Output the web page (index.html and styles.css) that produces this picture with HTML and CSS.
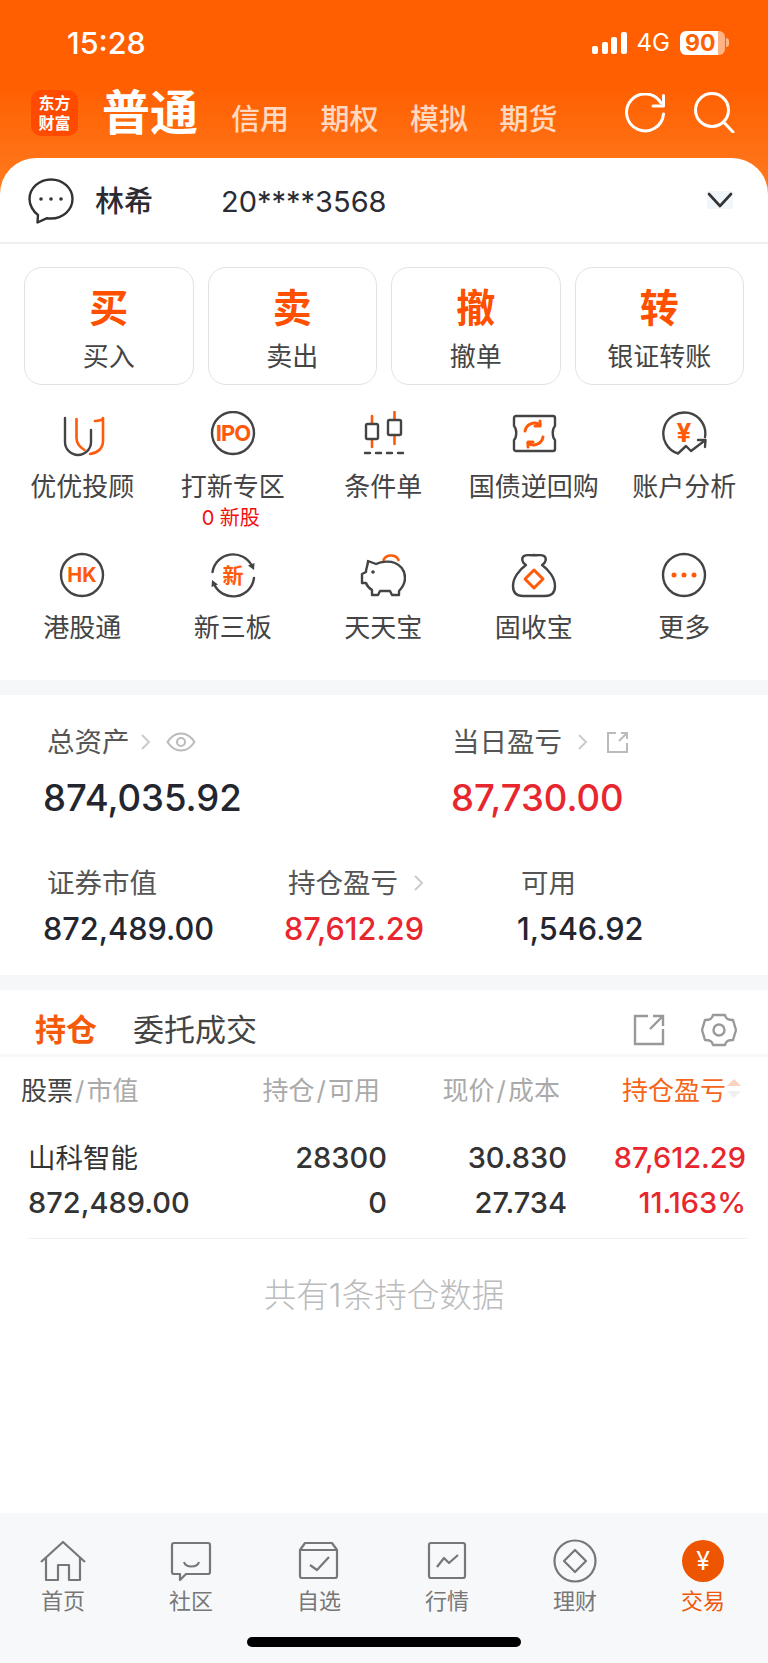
FILE: index.html
```html
<!DOCTYPE html>
<html lang="zh-CN">

<head>
    <meta charset="UTF-8">
    <meta name="viewport" content="width=device-width, initial-scale=1.0">
    <title>交易</title>
    <link rel="stylesheet" href="styles.css">
</head>

<body>
    <div class="app">
        <div class="top">
            <div class="status">
                <span class="time">15:28</span>
                <span class="bars"><i class="b1"></i><i class="b2"></i><i class="b3"></i><i class="b4"></i></span>
                <span class="net">4G</span>
                <span class="battery"><b>90</b></span>
                <span class="nub"></span>
            </div>
            <div class="nav">
                <div class="logo">东方<br>财富</div>
                <div class="nav-main">普通</div>
                <div class="nav-tabs">
                    <span>信用</span><span>期权</span><span>模拟</span><span>期货</span>
                </div>
                <svg class="refresh" width="40" height="40" viewBox="0 0 40 40" fill="none" stroke="#fff" stroke-width="3" stroke-linecap="round" stroke-linejoin="round">
                    <path d="M36 10A18.5 18.5 0 1 0 38.5 21" />
                    <path d="M28 13H38.5V2.500" />
                </svg>
                <svg class="search" width="42" height="42" viewBox="0 0 42 42" fill="none" stroke="#fff" stroke-width="3" stroke-linecap="round">
                    <circle cx="18" cy="19" r="16.500" />
                    <path d="M30 31.500L39 41" />
                </svg>
            </div>
            <div class="acct">
                <svg class="chat" width="46" height="46" viewBox="0 0 46 46" fill="none" stroke="#333" stroke-width="2.400" stroke-linejoin="round">
                    <path d="M23 1.500a21.500 19.500 0 0 1 0 39c-1.500 0-3-.1-4-.3L9.500 44.500l.5-7.500C5 33.500 1.500 27 1.500 21A21.500 19.500 0 0 1 23 1.500z" />
                    <circle cx="13" cy="21" r="1.800" fill="#333" stroke="none" />
                    <circle cx="23" cy="21" r="1.800" fill="#333" stroke="none" />
                    <circle cx="33" cy="21" r="1.800" fill="#333" stroke="none" />
                </svg>
                <span class="acct-name">林希</span>
                <span class="acct-no">20****3568</span>
                <span class="acct-more">
                    <svg width="26" height="18" viewBox="0 0 26 18" fill="none" stroke="#333" stroke-width="2.600" stroke-linecap="round" stroke-linejoin="round">
                        <path d="M2 3L13 15L24 3" />
                    </svg>
                </span>
            </div>
        </div>

        <div class="actions">
            <div class="act"><b>买</b><span>买入</span></div>
            <div class="act"><b>卖</b><span>卖出</span></div>
            <div class="act"><b>撤</b><span>撤单</span></div>
            <div class="act"><b>转</b><span>银证转账</span></div>
        </div>

        <div class="grid">
            <div class="cell">
                <svg class="ico" viewBox="0 0 46 46">
                    <path class="ln" d="M6 7V31a13 13 0 0 0 26 0V19" />
                    <path class="or" d="M17.500 8V27c0 5 3 9 8 12" />
                    <path class="or" d="M36 10c3 0 8-1 8-3V30c0 7-5 12-13 13" />
                </svg>
                <span class="lab">优优投顾</span>
            </div>
            <div class="cell">
                <svg class="ico" viewBox="0 0 46 46">
                    <circle class="ln" cx="23" cy="22" r="21" />
                    <text class="ico-t" x="23" y="30" font-size="22" letter-spacing="-1">IPO</text>
                </svg>
                <span class="lab">打新专区</span>
                <span class="sub">0 新股</span>
            </div>
            <div class="cell">
                <svg class="ico" viewBox="0 0 46 46">
                    <path class="or" d="M12 5V36M34.500 1V33" />
                    <rect class="ln fill" x="6" y="13" width="12" height="15" rx="1.500" />
                    <rect class="ln fill" x="28" y="9" width="13" height="15" rx="1.500" />
                    <path class="ln" d="M5 42H43" stroke-width="2.600" stroke-linecap="butt" stroke-dasharray="5 6" />
                </svg>
                <span class="lab">条件单</span>
            </div>
            <div class="cell">
                <svg class="ico" viewBox="0 0 46 46">
                    <path class="ln" d="M5 5H42a2 2 0 0 1 2 2V15c-3 3-3 11 0 14V38a2 2 0 0 1-2 2H5a2 2 0 0 1-2-2V29c3-3 3-11 0-14V7a2 2 0 0 1 2-2z" />
                    <path class="or th" d="M14 20a9.500 9.500 0 0 1 15-6M32 26a9.500 9.500 0 0 1-15 6" />
                    <path class="or th" d="M29 10v5h-5M17 36v-5h5" />
                </svg>
                <span class="lab">国债逆回购</span>
            </div>
            <div class="cell">
                <svg class="ico" viewBox="0 0 46 46">
                    <path class="ln" d="M44 26A21 21 0 1 0 17 42.500L25 35L30 40L44.500 29M37 29H44.500L44 36" />
                    <text class="ico-t" x="23" y="31" font-size="26">¥</text>
                </svg>
                <span class="lab">账户分析</span>
            </div>
            <div class="cell">
                <svg class="ico" viewBox="0 0 46 46">
                    <circle class="ln" cx="23" cy="23" r="21" />
                    <text class="ico-t" x="23" y="30" font-size="20">HK</text>
                </svg>
                <span class="lab">港股通</span>
            </div>
            <div class="cell">
                <svg class="ico" viewBox="0 0 46 46">
                    <path class="ln" d="M2.500 20A21 21 0 0 1 42 14M44 26A21 21 0 0 1 4 32" />
                    <path d="M38 13.500L44.500 11L44 18zM8 32.500L1.500 35L2 28z" fill="#444" />
                    <text class="ico-t cjk" x="23" y="31" font-size="21">新</text>
                </svg>
                <span class="lab">新三板</span>
            </div>
            <div class="cell">
                <svg class="ico" viewBox="0 0 46 46">
                    <path class="or" d="M23.500 8A8 7 0 0 1 38.500 8" />
                    <path class="ln fill" d="M8 9L16 12C22 9 30 9 35 11C42 14 45 20 45 26C45 32 42 36 39 39V43H32L30 39H20L18 43H12V38C9 36 7 34 6 31H2V22L6 20C6 16 8 13 8 9Z" />
                    <circle cx="13" cy="20" r="1.800" fill="#444" />
                </svg>
                <span class="lab">天天宝</span>
            </div>
            <div class="cell">
                <svg class="ico" viewBox="0 0 46 46">
                    <path class="ln" d="M15 13C11 11 10 6 13 4C16 2 19 4 23 3C27 4 30 2 33 4C36 6 35 11 31 13C38 18 44 26 44 34C44 41 40 44 34 44H12C6 44 2 41 2 34C2 26 8 18 15 13Z" />
                    <path class="or th" d="M23 18L32 27L23 36L14 27Z" />
                </svg>
                <span class="lab">固收宝</span>
            </div>
            <div class="cell">
                <svg class="ico" viewBox="0 0 46 46">
                    <circle class="ln" cx="23" cy="23" r="21" />
                    <circle cx="13" cy="23" r="2.500" fill="#ff5a0a" />
                    <circle cx="23" cy="23" r="2.500" fill="#ff5a0a" />
                    <circle cx="33" cy="23" r="2.500" fill="#ff5a0a" />
                </svg>
                <span class="lab">更多</span>
            </div>
        </div>

        <div class="band"></div>

        <div class="assets">
            <div class="asset-row r1">
                <div class="asset">
                    <div class="label">总资产
                        <svg class="chev" width="11" height="18" viewBox="0 0 11 18"><path d="M2 2L9 9L2 16" /></svg>
                        <svg class="eye" width="30" height="20" viewBox="0 0 30 20" fill="none" stroke="#bbb" stroke-width="2">
                            <path d="M1.500 10C6 3 10 1.500 15 1.500S24 3 28.500 10C24 17 20 18.500 15 18.500S6 17 1.500 10Z" />
                            <circle cx="15" cy="10" r="4" />
                        </svg>
                    </div>
                    <div class="val big">874,035.92</div>
                </div>
                <div class="asset">
                    <div class="label label-tight">当日盈亏
                        <svg class="chev chev-w" width="11" height="18" viewBox="0 0 11 18"><path d="M2 2L9 9L2 16" /></svg>
                        <svg class="ext" width="23" height="23" viewBox="0 0 23 23" fill="none" stroke="#bbb" stroke-width="2">
                            <path d="M10 2H2V21H21V12M13 10L21 2M15 2H21V8" />
                        </svg>
                    </div>
                    <div class="val big red">87,730.00</div>
                </div>
            </div>
            <div class="asset-row r2">
                <div class="asset">
                    <div class="label">证券市值</div>
                    <div class="val">872,489.00</div>
                </div>
                <div class="asset">
                    <div class="label">持仓盈亏
                        <svg class="chev chev-w" width="11" height="18" viewBox="0 0 11 18"><path d="M2 2L9 9L2 16" /></svg>
                    </div>
                    <div class="val red">87,612.29</div>
                </div>
                <div class="asset">
                    <div class="label">可用</div>
                    <div class="val">1,546.92</div>
                </div>
            </div>
        </div>

        <div class="band"></div>

        <div class="pos-tabs">
            <span class="pos-on">持仓</span>
            <span class="pos-off">委托成交</span>
            <svg class="pos-ext" width="32" height="32" viewBox="0 0 32 32" fill="none" stroke="#999" stroke-width="2.400">
                <path d="M15 2H2V30H30V15M17 15L30 2M20 2H30V12" />
            </svg>
            <svg class="pos-set" width="36" height="36" viewBox="0 0 36 36" fill="none" stroke="#999" stroke-width="2.400" stroke-linejoin="round">
                <path d="M12 3H24C25 7 27 8 32 8L35 18L32 28C27 28 25 29 24 33H12C11 29 9 28 4 28L1 18L4 8C9 8 11 7 12 3Z" />
                <circle cx="18" cy="18" r="5.500" />
            </svg>
        </div>

        <div class="thead">
            <div><em>股票</em><span class="sl">/</span>市值</div>
            <div class="rt">持仓<span class="sl">/</span>可用</div>
            <div class="rt">现价<span class="sl">/</span>成本</div>
            <div class="rt sorted">持仓盈亏</div>
            <div class="sort"><i class="up"></i><i class="down"></i></div>
        </div>

        <div class="holding">
            <div class="h-name">山科智能</div>
            <div class="rt">28300</div>
            <div class="rt">30.830</div>
            <div class="rt red">87,612.29</div>
            <div>872,489.00</div>
            <div class="rt">0</div>
            <div class="rt">27.734</div>
            <div class="rt red">11.163%</div>
        </div>

        <div class="empty">共有1条持仓数据</div>

        <div class="tabbar">
            <div class="tabs">
                <div class="tab">
                    <svg class="tab-ico" viewBox="0 0 46 46">
                        <path d="M1 24L23 4L45 24M6 20V42H18V27H29V42H40V20" />
                    </svg>
                    <span>首页</span>
                </div>
                <div class="tab">
                    <svg class="tab-ico" viewBox="0 0 46 46">
                        <path d="M6 5H40a2 2 0 0 1 2 2V34a2 2 0 0 1-2 2H18L12 42V36H6a2 2 0 0 1-2-2V7a2 2 0 0 1 2-2z" />
                        <path d="M16 24c2 6 13 6 15 0" />
                    </svg>
                    <span>社区</span>
                </div>
                <div class="tab">
                    <svg class="tab-ico" viewBox="0 0 46 46">
                        <path d="M9 5H36L41 12V38a2 2 0 0 1-2 2H6a2 2 0 0 1-2-2V12ZM4 12H41" />
                        <path d="M14 27L21 32L33 19" />
                    </svg>
                    <span>自选</span>
                </div>
                <div class="tab">
                    <svg class="tab-ico" viewBox="0 0 46 46">
                        <rect x="5" y="5" width="36" height="35" rx="2" />
                        <path d="M13 29L20 20L25 25L34 17" />
                    </svg>
                    <span>行情</span>
                </div>
                <div class="tab">
                    <svg class="tab-ico" viewBox="0 0 46 46">
                        <circle cx="23" cy="23" r="20.500" />
                        <path d="M23 12L34 23L23 34L12 23Z" />
                    </svg>
                    <span>理财</span>
                </div>
                <div class="tab tab-on">
                    <svg class="tab-ico" viewBox="0 0 46 46">
                        <circle class="tab-disc" cx="23" cy="23" r="21" />
                        <text class="tab-yen" x="23" y="32" font-size="25">¥</text>
                    </svg>
                    <span>交易</span>
                </div>
            </div>
            <div class="home-bar"></div>
        </div>
    </div>
</body>

</html>
```

FILE: styles.css
```css
* {
    box-sizing: border-box;
}

body {
    margin: 0;
    background: #fff;
    font-family: Inter, "Noto Sans CJK SC", sans-serif;
    color: #333;
}

.app {
    width: 768px;
    height: 1663px;
    display: flex;
    flex-direction: column;
    overflow: hidden;
}

i,
em {
    font-style: normal;
}

.red {
    color: #e8262d;
}

.rt {
    text-align: right;
}

/* orange head */
.top {
    height: 244px;
    background: linear-gradient(#ff5f00 0, #ff5f00 85px, #ff7a20 190px);
}

.status {
    height: 85px;
    padding: 0 39px 0 67px;
    display: flex;
    align-items: center;
    color: #fff;
}

.time {
    font-size: 30.500px;
    font-weight: 500;
    margin-right: auto;
}

.bars {
    display: flex;
    align-items: flex-end;
    gap: 3.500px;
    height: 22px;
    margin-right: 10px;
}

.bars i {
    width: 6px;
    background: #fff;
    border-radius: 2px;
}

.b1 {
    height: 8px;
}

.b2 {
    height: 12px;
}

.b3 {
    height: 17px;
}

.b4 {
    height: 22px;
}

.net {
    font-size: 24px;
    margin-right: 10px;
}

.battery {
    width: 45px;
    height: 24px;
    background: linear-gradient(90deg, #fff 38px, #ffb283 38px);
    border-radius: 6px;
    display: flex;
    align-items: center;
    padding-left: 5px;
}

.battery b {
    color: #ff5f00;
    font-size: 23px;
    font-weight: 700;
}

.nub {
    width: 3px;
    height: 9px;
    margin-left: 1px;
    background: #ffb283;
    border-radius: 0 3px 3px 0;
}

.nav {
    height: 73px;
    padding: 5px 32px 0 31px;
    display: flex;
    align-items: flex-start;
}

.logo {
    width: 47px;
    height: 46px;
    background: #ff4a00;
    border-radius: 10px;
    color: #fff;
    font-size: 16px;
    font-weight: 700;
    line-height: 20px;
    padding-top: 3px;
    text-align: center;
}

.nav-main {
    margin-left: 24px;
    font-size: 48px;
    font-weight: 700;
    line-height: 46px;
    color: #fff;
}

.nav-tabs {
    margin: 12px 0 0 33px;
    display: flex;
    gap: 31.500px;
    font-size: 29px;
    font-weight: 500;
    line-height: 36px;
    color: rgba(255, 255, 255, 0.75);
}

.refresh {
    margin: 3px 0 0 auto;
}

.search {
    margin: 1px 0 0 29px;
}

.acct {
    height: 86px;
    background: #fff;
    border-radius: 36px 36px 0 0;
    border-bottom: 2px solid #eef0f2;
    padding-left: 28px;
    display: flex;
    align-items: center;
    color: #2b2b33;
}

.chat {
    margin-top: 1px;
}

.acct-name {
    margin-left: 21px;
    width: 126px;
    font-size: 29px;
    font-weight: 500;
    margin-top: -3px;
}

.acct-no {
    font-size: 29px;
    font-weight: 400;
    margin-top: 3px;
}

.acct-more {
    margin-left: auto;
    margin-right: 35px;
    display: flex;
    background: #f1f6fb;
}

/* buy / sell buttons */
.actions {
    padding: 23px 24px 0;
    display: flex;
    gap: 14px;
}

.act {
    flex: 1;
    height: 118px;
    border: 1.500px solid #e2e2e2;
    border-radius: 18px;
    display: flex;
    flex-direction: column;
    align-items: center;
    padding-top: 17px;
}

.act b {
    font-size: 39px;
    line-height: 46px;
    font-weight: 700;
    color: #ff5000;
}

.act span {
    margin-top: 9px;
    font-size: 26px;
    line-height: 34px;
    color: #444;
}

/* shortcuts */
.grid {
    margin: 26px 0 0 7px;
    width: 752.500px;
    height: 269px;
    display: grid;
    grid-template-columns: repeat(5, 1fr);
    grid-template-rows: 141px 1fr;
}

.cell {
    display: flex;
    flex-direction: column;
    align-items: center;
}

.ico {
    width: 46px;
    height: 46px;
    flex: none;
}

.ln,
.or {
    fill: none;
    stroke-width: 2.400;
    stroke-linecap: round;
    stroke-linejoin: round;
}

.ln {
    stroke: #444;
}

.or {
    stroke: #ff5a0a;
    stroke-width: 2.600;
}

.or.th {
    stroke-width: 3;
}

.ln.fill {
    fill: #fff;
}

.ico-t {
    fill: #ff5a0a;
    font-weight: 700;
    text-anchor: middle;
}

.lab {
    margin-top: 14px;
    font-size: 26px;
    line-height: 32px;
    color: #444;
    white-space: nowrap;
}

.sub {
    margin: 5px 4px 0 0;
    font-size: 20px;
    line-height: 20px;
    color: #f01010;
}

.band {
    height: 15px;
    flex: none;
    background: #f6f7f9;
}

/* assets */
.assets {
    height: 280px;
    padding: 29px 0 0 43px;
}

.asset-row {
    display: grid;
}

.r1 {
    grid-template-columns: 408px 1fr;
    margin-bottom: 45px;
}

.r2 {
    grid-template-columns: 241px 233px 1fr;
}

.label {
    padding-left: 4px;
    height: 36px;
    font-size: 27.500px;
    line-height: 36px;
    color: #555;
    display: flex;
    align-items: center;
}

.label-tight {
    padding-left: 1px;
}

.chev {
    margin-left: 10px;
    fill: none;
    stroke: #ccc;
    stroke-width: 2;
}

.chev-w {
    margin-left: 15px;
}

.eye {
    margin-left: 15px;
}

.ext {
    margin-left: 18px;
}

.val {
    margin-top: 8px;
    font-size: 30.700px;
    line-height: 40px;
    font-weight: 500;
    color: #23262e;
}

.val.red {
    color: #e8262d;
}

.big {
    margin-top: 16px;
    font-size: 36.500px;
    line-height: 44px;
}

/* holdings */
.pos-tabs {
    height: 67px;
    flex: none;
    padding: 19px 31px 0 35px;
    border-bottom: 3px solid #f7f8fa;
    display: flex;
    align-items: flex-start;
    font-size: 31px;
    line-height: 42px;
}

.pos-on {
    color: #f55a0a;
    font-weight: 700;
}

.pos-off {
    margin-left: 36px;
    color: #444;
}

.pos-ext {
    margin: 5px -1px 0 auto;
}

.pos-set {
    margin: 3px 0 0 37px;
}

.thead {
    height: 62px;
    flex: none;
    padding-left: 21px;
    display: grid;
    grid-template-columns: 190px 169px 180px 166px 16px;
    align-items: center;
    font-size: 26px;
    color: #aaa;
    white-space: nowrap;
}

.thead em {
    color: #444;
}

.sl {
    margin: 0 2px;
}

.sorted {
    color: #f5651a;
}

.sort {
    display: flex;
    flex-direction: column;
    align-items: center;
    gap: 5px;
}

.sort i {
    width: 0;
    height: 0;
    border-left: 7px solid transparent;
    border-right: 7px solid transparent;
}

.up {
    border-bottom: 7px solid #fbd3c0;
}

.down {
    border-top: 7px solid #f0f0f0;
}

.holding {
    margin: 16px 21px 0 28px;
    padding-bottom: 13px;
    border-bottom: 1px solid #f1f1f1;
    display: grid;
    grid-template-columns: 200px 159px 180px 179px;
    grid-auto-rows: 45px;
    align-items: center;
    font-size: 29px;
    font-weight: 500;
    color: #333;
}

.h-name {
    font-size: 27.500px;
    font-weight: 400;
    margin-top: -4px;
}

.empty {
    margin-top: 35px;
    line-height: 44px;
    font-size: 32.500px;
    font-weight: 300;
    text-align: center;
    color: #bbb;
}

/* bottom tabs */
.tabbar {
    margin-top: auto;
    height: 150px;
    flex: none;
    background: #f7f8fa;
    padding-top: 25px;
}

.tabs {
    display: grid;
    grid-template-columns: repeat(6, 128px);
    margin-left: -1px;
}

.tab {
    display: flex;
    flex-direction: column;
    align-items: center;
    font-size: 22px;
    line-height: 26px;
    color: #777;
}

.tab span {
    margin-top: 4px;
}

.tab-ico {
    width: 46px;
    height: 46px;
    fill: none;
    stroke: #777;
    stroke-width: 2.200;
    stroke-linejoin: round;
}

.tab-on {
    color: #f0570a;
}

.tab-disc {
    fill: #ee5500;
    stroke: none;
}

.tab-yen {
    fill: #fff;
    stroke: none;
    font-weight: 400;
    text-anchor: middle;
}

.home-bar {
    width: 274px;
    height: 10px;
    margin: 23px auto 0;
    background: #000;
    border-radius: 5px;
}
```
